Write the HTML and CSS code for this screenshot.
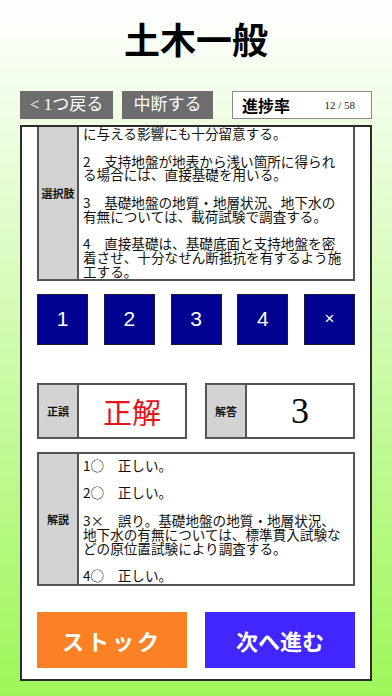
FILE: index.html
```html
<!DOCTYPE html>
<html lang="ja">
<head>
    <meta charset="UTF-8">
    <meta name="viewport" content="width=device-width, initial-scale=1.0">
    <title>土木一般</title>
    <link rel="stylesheet" href="styles.css">
</head>
<body>
    <div class="screen">
        <header class="header">
            <h1 class="title">土木一般</h1>
        </header>

        <div class="toolbar">
            <button class="tool-button back">&lt; 1つ戻る</button>
            <button class="tool-button pause">中断する</button>
            <div class="progress">
                <span class="progress-label">進捗率</span>
                <span class="progress-count">12 / 58</span>
            </div>
        </div>

        <div class="card">
            <div class="info-box choices">
                <div class="info-label choices-label">選択肢</div>
                <div class="info-text">
                    に与える影響にも十分留意する。<br><br>
                    2　支持地盤が地表から浅い箇所に得られ<br>
                    る場合には、直接基礎を用いる。<br><br>
                    3　基礎地盤の地質・地層状況、地下水の<br>
                    有無については、載荷試験で調査する。<br><br>
                    4　直接基礎は、基礎底面と支持地盤を密<br>
                    着させ、十分なせん断抵抗を有するよう施<br>
                    工する。
                </div>
            </div>

            <div class="answer-buttons">
                <button class="answer-button">1</button>
                <button class="answer-button">2</button>
                <button class="answer-button">3</button>
                <button class="answer-button">4</button>
                <button class="answer-button cross">×</button>
            </div>

            <div class="result-row">
                <div class="result-box">
                    <div class="info-label">正誤</div>
                    <div class="result-value correct">正解</div>
                </div>
                <div class="result-box">
                    <div class="info-label">解答</div>
                    <div class="result-value number">3</div>
                </div>
            </div>

            <div class="info-box explanation">
                <div class="info-label">解説</div>
                <div class="info-text">
                    1○　正しい。<br><br>
                    2○　正しい。<br><br>
                    3×　誤り。基礎地盤の地質・地層状況、<br>
                    地下水の有無については、標準貫入試験な<br>
                    どの原位置試験により調査する。<br><br>
                    4○　正しい。
                </div>
            </div>

            <div class="action-row">
                <button class="action-button stock">ストック</button>
                <button class="action-button next">次へ進む</button>
            </div>
        </div>
    </div>
</body>
</html>
```

FILE: styles.css
```css
:root {
    --label-gray: #d3d3d3;
    --box-border: #555555;
    --navy: #000091;
    --orange: #fb8124;
    --blue: #4126fd;
    --jp-sans: 'Noto Sans CJK JP', 'Noto Sans', sans-serif;
    --jp-serif: 'Liberation Serif', 'Noto Sans CJK JP', serif;
}

* {
    box-sizing: border-box;
    margin: 0;
    padding: 0;
}

body {
    width: 392px;
    height: 696px;
    overflow: hidden;
    font-family: var(--jp-sans);
    background: linear-gradient(to bottom, #ffffff 0%, #9ef759 100%);
}

button {
    border: none;
    font: inherit;
    cursor: pointer;
}

.header {
    height: 91px;
    display: flex;
    align-items: center;
    justify-content: center;
    padding-bottom: 8px;
}

.title {
    font-family: var(--jp-serif);
    font-size: 36px;
    font-weight: 700;
    line-height: 44px;
    color: #000;
}

/* top toolbar */
.toolbar {
    height: 28px;
    padding: 0 20px;
    display: flex;
    align-items: stretch;
}

.tool-button {
    background-color: #6d6d6d;
    color: white;
    font-family: var(--jp-serif);
    font-size: 17px;
    line-height: 28px;
}

.back {
    width: 93px;
    margin-right: 9px;
}

.pause {
    width: 91px;
}

.progress {
    margin-left: auto;
    width: 140px;
    background-color: white;
    border: 1.5px solid #8a8a8a;
    display: flex;
    align-items: center;
    padding: 0 16px 0 9px;
}

.progress-label {
    font-size: 16px;
    font-weight: 700;
    color: #000;
}

.progress-count {
    margin-left: auto;
    font-family: 'Liberation Serif', serif;
    font-size: 11px;
    color: #222;
}

/* main card */
.card {
    margin: 6px 20px 0;
    height: 556px;
    background-color: white;
    border: 2px solid #2b2b2b;
    padding: 0 15px 0 15px;
    overflow: hidden;
}

.info-box {
    display: flex;
    border: 2px solid var(--box-border);
}

.info-label {
    width: 40px;
    flex-shrink: 0;
    background-color: var(--label-gray);
    border-right: 2px solid var(--box-border);
    display: flex;
    align-items: center;
    justify-content: center;
    font-size: 11px;
    font-weight: 700;
    color: #111;
}

.info-text {
    flex: 1;
    padding-left: 4px;
    font-size: 13.6px;
    line-height: 13.8px;
    color: #111;
    white-space: nowrap;
}

.choices {
    border-top: none;
}

.choices-label {
    padding-bottom: 20px;
}

.explanation {
    margin-top: 13px;
}

.explanation .info-text {
    padding-top: 5px;
    padding-bottom: 1px;
}

/* answer number buttons */
.answer-buttons {
    margin-top: 13px;
    display: flex;
    justify-content: space-between;
}

.answer-button {
    width: 51px;
    height: 51px;
    background-color: var(--navy);
    border: 1px solid #1a1a3a;
    color: white;
    font-family: 'Liberation Sans', sans-serif;
    font-size: 21px;
}

.answer-button.cross {
    font-size: 17px;
}

/* result boxes */
.result-row {
    margin-top: 38px;
    display: flex;
    justify-content: space-between;
}

.result-box {
    width: 150px;
    height: 56px;
    display: flex;
    border: 2px solid var(--box-border);
}

.result-value {
    flex: 1;
    display: flex;
    align-items: center;
    justify-content: center;
}

.correct {
    font-family: var(--jp-serif);
    font-size: 29px;
    color: #e4141c;
}

.number {
    font-family: 'Liberation Serif', serif;
    font-size: 36px;
    color: #000;
}

/* bottom actions */
.action-row {
    margin-top: 26px;
    display: flex;
    justify-content: space-between;
}

.action-button {
    width: 150px;
    height: 56px;
    color: white;
    font-family: var(--jp-serif);
    font-size: 22px;
    font-weight: 700;
}

.stock {
    background-color: var(--orange);
    letter-spacing: 3px;
}

.next {
    background-color: var(--blue);
}
```
